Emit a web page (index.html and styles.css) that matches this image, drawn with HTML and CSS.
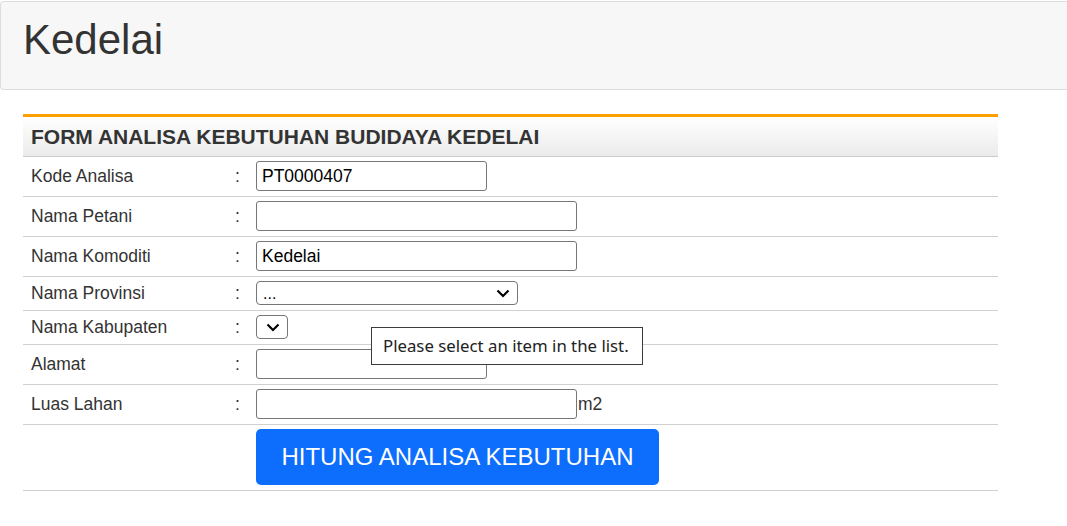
FILE: index.html
```html
<!DOCTYPE html>
<html lang="id">

<head>
    <meta charset="UTF-8">
    <title>Kedelai</title>
    <link rel="stylesheet" href="styles.css">
</head>

<body>
    <header class="topbar">
        <h1>Kedelai</h1>
    </header>

    <div class="content">
        <div class="panel">
            <div class="panel-head">FORM ANALISA KEBUTUHAN BUDIDAYA KEDELAI</div>

            <form class="form" onsubmit="return false">
                <div class="row">
                    <label for="kode">Kode Analisa</label>
                    <span class="sep">:</span>
                    <div class="field"><input type="text" id="kode" class="inp short" value="PT0000407"></div>
                </div>
                <div class="row">
                    <label for="petani">Nama Petani</label>
                    <span class="sep">:</span>
                    <div class="field"><input type="text" id="petani" class="inp long"></div>
                </div>
                <div class="row">
                    <label for="komoditi">Nama Komoditi</label>
                    <span class="sep">:</span>
                    <div class="field"><input type="text" id="komoditi" class="inp long" value="Kedelai"></div>
                </div>
                <div class="row slim">
                    <label for="provinsi">Nama Provinsi</label>
                    <span class="sep">:</span>
                    <div class="field">
                        <span class="sel-wrap">
                            <select id="provinsi" class="sel prov">
                                <option>...</option>
                            </select>
                            <svg class="chev" width="14" height="9" viewBox="0 0 14 9"><path d="M1.5 1.5 L7 7 L12.5 1.5" fill="none" stroke="#000" stroke-width="2.2"/></svg>
                        </span>
                    </div>
                </div>
                <div class="row slim">
                    <label for="kabupaten">Nama Kabupaten</label>
                    <span class="sep">:</span>
                    <div class="field">
                        <span class="sel-wrap">
                            <select id="kabupaten" class="sel kab"></select>
                            <svg class="chev" width="14" height="9" viewBox="0 0 14 9"><path d="M1.5 1.5 L7 7 L12.5 1.5" fill="none" stroke="#000" stroke-width="2.2"/></svg>
                        </span>
                    </div>
                    <div class="bubble">Please select an item in the list.</div>
                </div>
                <div class="row">
                    <label for="alamat">Alamat</label>
                    <span class="sep">:</span>
                    <div class="field"><input type="text" id="alamat" class="inp short"></div>
                </div>
                <div class="row">
                    <label for="luas">Luas Lahan</label>
                    <span class="sep">:</span>
                    <div class="field"><input type="text" id="luas" class="inp long"><span class="unit">m2</span></div>
                </div>
                <div class="row tall">
                    <span></span>
                    <span></span>
                    <div class="field"><button type="submit" class="btn-hitung">HITUNG ANALISA KEBUTUHAN</button></div>
                </div>
            </form>
        </div>
    </div>
</body>

</html>
```

FILE: styles.css
```css
body {
    margin: 0;
    background-color: #fff;
    font-family: "Liberation Sans", Arial, sans-serif;
    color: #333;
}

.topbar {
    margin-top: 1px;
    background-color: #f7f7f7;
    border: 1px solid #ddd;
    border-right: none;
    border-radius: 4px 0 0 4px;
    padding: 15px 22px 27px;
}

.topbar h1 {
    margin: 0;
    font-size: 42px;
    font-weight: normal;
    line-height: 45px;
    color: #333;
}

.content {
    padding: 24px 0 0 23px;
}

.panel {
    width: 975px;
    border-top: 3px solid #ffa000;
}

.panel-head {
    height: 39px;
    line-height: 39px;
    padding-left: 8px;
    font-size: 21px;
    font-weight: bold;
    color: #333;
    background: linear-gradient(to bottom, #fff, #ebebeb);
    border-bottom: 1px solid #ccc;
}

.row {
    position: relative;
    display: grid;
    grid-template-columns: 212px 21px 1fr;
    align-items: center;
    height: 39px;
    border-bottom: 1px solid #d0d0d0;
    font-size: 17.5px;
}

.row.slim {
    height: 33px;
}

.row.tall {
    height: 65px;
}

.row label {
    padding-left: 8px;
}

.field {
    display: flex;
    align-items: center;
}

.inp {
    box-sizing: border-box;
    height: 30px;
    margin-bottom: 1px;
    padding: 0 5px;
    border: 1px solid #767676;
    border-radius: 3px;
    font-family: "Liberation Sans", Arial, sans-serif;
    font-size: 17.5px;
    color: #000;
    background-color: #fff;
}

.inp.short {
    width: 231px;
}

.inp.long {
    width: 321px;
}

.unit {
    margin-left: 1px;
}

.sel-wrap {
    position: relative;
    display: inline-flex;
    margin-bottom: 1px;
}

.sel {
    -webkit-appearance: none;
    appearance: none;
    box-sizing: border-box;
    height: 24px;
    padding: 0 6px;
    border: 1px solid #767676;
    border-radius: 4px;
    font-family: "Liberation Sans", Arial, sans-serif;
    font-size: 16px;
    color: #000;
    background-color: #fff;
}

.sel.prov {
    width: 262px;
}

.sel.kab {
    width: 32px;
}

.chev {
    position: absolute;
    right: 8px;
    top: 8px;
    pointer-events: none;
}

.bubble {
    position: absolute;
    z-index: 2;
    left: 348px;
    top: 16px;
    box-sizing: border-box;
    display: flex;
    align-items: center;
    width: 272px;
    height: 38px;
    padding: 0 11px 2px;
    border: 1px solid #3c3c3c;
    background-color: #fff;
    font-family: "Noto Sans", "Open Sans", sans-serif;
    font-size: 16.8px;
    color: #222;
    white-space: nowrap;
}

.btn-hitung {
    width: 403px;
    height: 56px;
    margin-bottom: 1px;
    border: none;
    border-radius: 5px;
    background-color: #0d6efd;
    color: #fff;
    font-family: "Liberation Sans", Arial, sans-serif;
    font-size: 24px;
    cursor: pointer;
}

.btn-hitung:hover {
    background-color: #0b5ed7;
}
```
